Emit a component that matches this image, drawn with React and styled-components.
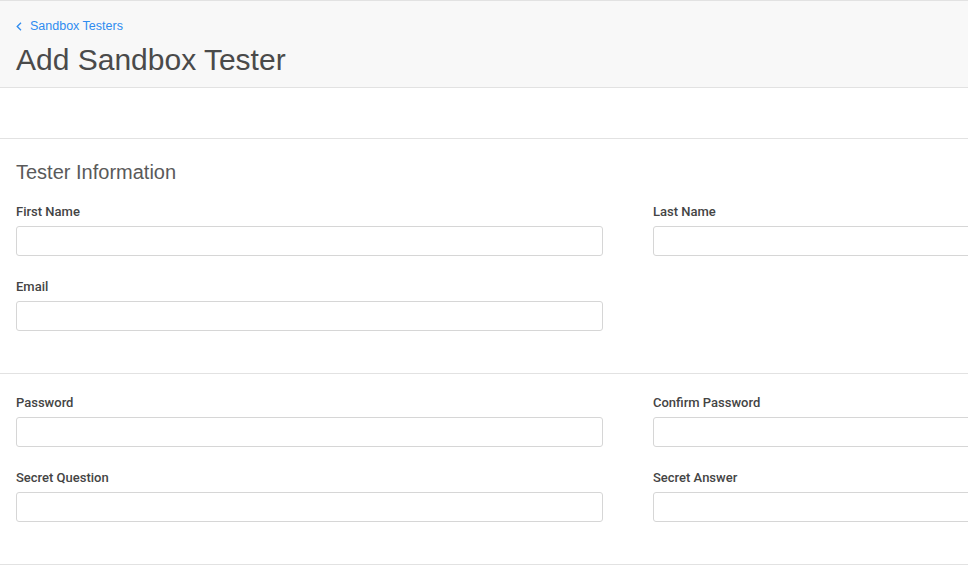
import React from 'react';
import styled, { createGlobalStyle } from 'styled-components';

const GlobalStyle = createGlobalStyle`
  html, body {
    margin: 0;
    padding: 0;
    background: #fff;
    overflow: hidden;
  }
  body {
    font-family: 'Liberation Sans', Arial, sans-serif;
    color: #333;
  }
`;

const Page = styled.div`
  min-width: 1256px;
`;

const Header = styled.header`
  background: #f8f8f8;
  border-top: 1px solid #e2e2e2;
  border-bottom: 1px solid #e2e2e2;
  padding: 17px 16px 9px;
`;

const Breadcrumb = styled.a`
  display: flex;
  align-items: center;
  gap: 8px;
  height: 16px;
  font-size: 12.5px;
  line-height: 16px;
  color: #2f8cf0;
  text-decoration: none;
  cursor: pointer;
`;

const Title = styled.h1`
  margin: 8px 0 0;
  font-size: 30px;
  line-height: 36px;
  font-weight: 400;
  color: #4a4a4a;
`;

const Spacer = styled.div`
  height: 50px;
  border-bottom: 1px solid #e2e2e2;
`;

const Section = styled.section`
  padding: ${p => (p.$titled ? '21px' : '20px')} 16px 42px;
  border-bottom: 1px solid #e2e2e2;
`;

const SectionTitle = styled.h2`
  margin: 0 0 19px;
  font-size: 20px;
  line-height: 24px;
  font-weight: 400;
  color: #5a5a5a;
`;

const Grid = styled.div`
  display: grid;
  grid-template-columns: 587px 587px;
  column-gap: 50px;
  row-gap: 22px;
`;

const Field = styled.div`
  display: flex;
  flex-direction: column;
  gap: 6px;
`;

const Label = styled.label`
  padding-top: 1px;
  font-family: Roboto, 'Liberation Sans', sans-serif;
  font-size: 13px;
  line-height: 16px;
  font-weight: 500;
  color: #444;
`;

const Input = styled.input`
  box-sizing: border-box;
  height: 30px;
  width: 100%;
  border: 1px solid #d6d6d6;
  border-radius: 3px;
  background: #fff;
  padding: 0 8px;
  font-family: 'Liberation Sans', sans-serif;
  font-size: 13px;
  outline: none;
`;

const Chevron = () => (
  <svg width="6" height="9" viewBox="0 0 6 9">
    <polyline points="5,0.8 1.2,4.5 5,8.2" fill="none" stroke="#2f8cf0" strokeWidth="1.3" />
  </svg>
);

const FormField = ({ label, type = 'text' }) => (
  <Field>
    <Label>{label}</Label>
    <Input type={type} />
  </Field>
);

export default function App() {
  return (
    <>
      <GlobalStyle />
      <Page>
        <Header>
          <Breadcrumb>
            <Chevron />
            Sandbox Testers
          </Breadcrumb>
          <Title>Add Sandbox Tester</Title>
        </Header>
        <Spacer />
        <Section $titled>
          <SectionTitle>Tester Information</SectionTitle>
          <Grid>
            <FormField label="First Name" />
            <FormField label="Last Name" />
            <FormField label="Email" type="email" />
          </Grid>
        </Section>
        <Section>
          <Grid>
            <FormField label="Password" type="password" />
            <FormField label="Confirm Password" type="password" />
            <FormField label="Secret Question" />
            <FormField label="Secret Answer" />
          </Grid>
        </Section>
      </Page>
    </>
  );
}
